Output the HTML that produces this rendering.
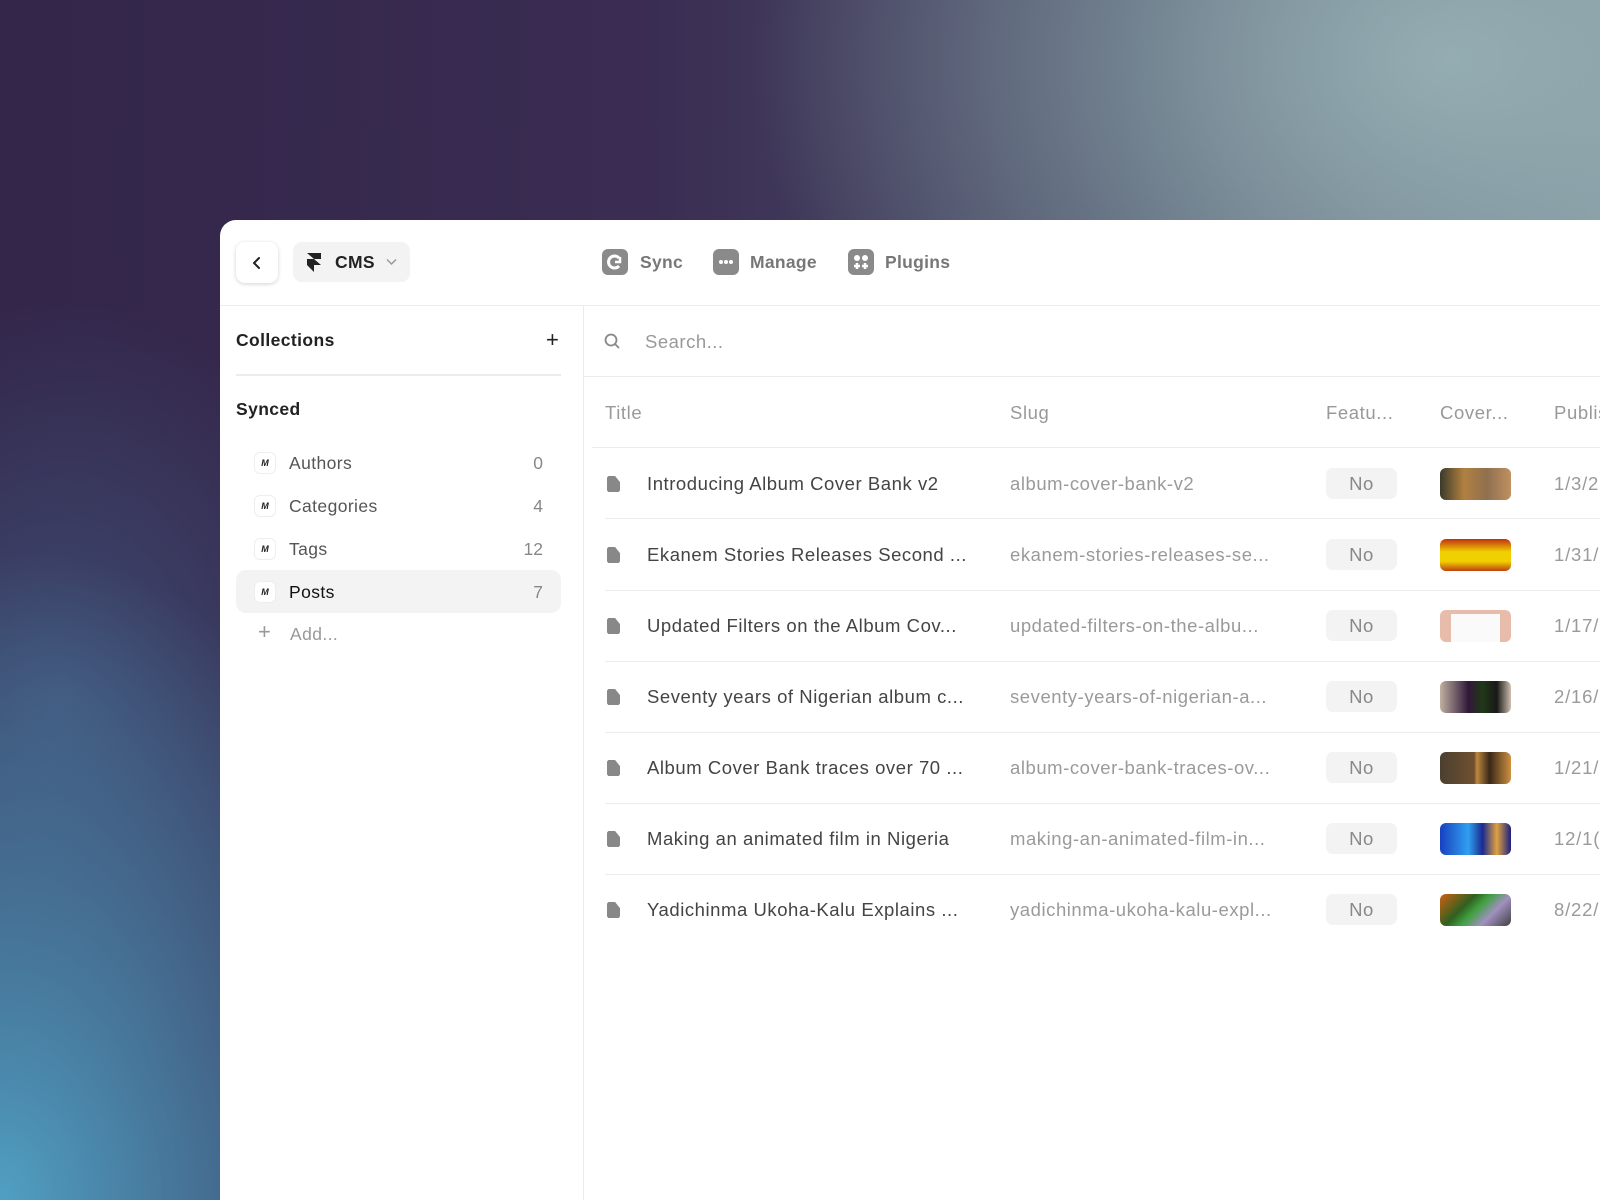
<!DOCTYPE html>
<html><head><meta charset="utf-8"><style>
*{box-sizing:border-box;margin:0;padding:0}
html,body{width:1600px;height:1200px;overflow:hidden}
body{position:relative;font-family:"Liberation Sans",sans-serif;background:#2e2242}
.bg{position:absolute;left:0;top:0;width:1600px;height:1200px;background:
radial-gradient(ellipse 700px 500px at 1450px 60px,rgba(150,175,180,0.95),rgba(150,175,180,0) 100%),
radial-gradient(ellipse 500px 650px at 0px 1200px,rgba(80,160,195,1),rgba(80,160,195,0) 100%),
radial-gradient(ellipse 300px 400px at 60px 700px,rgba(70,100,140,0.6),rgba(70,100,140,0) 100%),
linear-gradient(90deg,#33264a 0%,#3a2c52 40%,#4a5068 70%,#7a8e98 100%);}
.panel{position:absolute;left:220px;top:220px;width:1400px;height:1000px;background:#fff;border-radius:16px 0 0 0}
.a{position:absolute}
.btn{position:absolute;left:236px;top:242px;width:42px;height:41px;background:#fff;border-radius:9px;box-shadow:0 1px 4px rgba(0,0,0,.18)}
.cms{position:absolute;left:293px;top:242px;width:117px;height:40px;background:#f3f3f3;border-radius:9px}
.nav{position:absolute;top:252px;font-size:17.5px;color:#777;font-weight:bold;letter-spacing:0.3px}
.ic{position:absolute;top:249px;width:26px;height:26px;background:#8a8a8a;border-radius:6px}
.t{position:absolute;font-size:17.5px;color:#555;line-height:20px;letter-spacing:0.4px}
.row{position:absolute;left:605px;width:1000px;height:1px;background:#ececec}
.no{position:absolute;left:1326px;width:71px;height:31px;background:#f3f3f3;border-radius:7px;color:#888;font-size:18.5px;text-align:center;line-height:31px;letter-spacing:0.5px}
.th{position:absolute;left:1440px;width:71px;height:32px;border-radius:6px}
.rt{position:absolute;left:647px;font-size:18.5px;color:#444;letter-spacing:0.55px}
.rs{position:absolute;left:1010px;font-size:18.5px;color:#9a9a9a;letter-spacing:0.55px}
.rd{position:absolute;left:1554px;font-size:18.5px;color:#9a9a9a;white-space:nowrap;letter-spacing:0.8px}
.hd{position:absolute;top:402px;font-size:18.5px;color:#999;letter-spacing:0.6px}
.fi{position:absolute;left:607px;width:13px;height:16px;background:#888;clip-path:polygon(0 10%,10% 0,62% 0,100% 38%,100% 90%,90% 100%,10% 100%,0 90%)}
.ci{position:absolute;left:255px;width:20px;height:20px;border-radius:5px;background:#fff;box-shadow:0 0 0 1px #eee;font-size:9px;font-style:italic;font-weight:bold;text-align:center;line-height:20px;color:#222}
.cnt{position:absolute;right:1057px;font-size:17.5px;color:#888}
</style></head><body>
<div class="bg"></div>
<div class="panel"></div>
<div class="btn"><svg class="a" style="left:13px;top:13px" width="16" height="16" viewBox="0 0 16 16"><path d="M10 3 5 8l5 5" fill="none" stroke="#222" stroke-width="2" stroke-linecap="round" stroke-linejoin="round"/></svg></div>
<div class="cms"><svg class="a" style="left:13px;top:11px" width="16" height="19" viewBox="0 0 16 19"><path d="M1 0h14v6H8zM1 6h7l7 6H8v7L1 12z" fill="#222"/></svg><span class="a" style="left:42px;top:10px;font-size:17.5px;font-weight:bold;color:#222;letter-spacing:0.3px">CMS</span><svg class="a" style="left:93px;top:16px" width="11" height="8" viewBox="0 0 11 8"><path d="M1 1.5l4.5 4.5 4.5-4.5" fill="none" stroke="#999" stroke-width="1.5"/></svg></div>
<div class="ic" style="left:602px"><svg width="26" height="26" viewBox="0 0 26 26"><path d="M17 9a6 6 0 1 0 0 8" fill="none" stroke="#fff" stroke-width="3"/><path d="M13 13h5v-5" fill="none" stroke="#fff" stroke-width="2.5"/></svg></div>
<div class="nav" style="left:640px">Sync</div>
<div class="ic" style="left:713px"><svg width="26" height="26"><circle cx="8" cy="13" r="2" fill="#fff"/><circle cx="13" cy="13" r="2" fill="#fff"/><circle cx="18" cy="13" r="2" fill="#fff"/></svg></div>
<div class="nav" style="left:750px">Manage</div>
<div class="ic" style="left:848px"><svg width="26" height="26"><circle cx="9" cy="9" r="3" fill="#fff"/><circle cx="17" cy="9" r="3" fill="#fff"/><path d="M9 14v6M6 17h6M17 14v6M14 17h6" stroke="#fff" stroke-width="2.5"/></svg></div>
<div class="nav" style="left:885px">Plugins</div>
<div class="a" style="left:220px;top:305px;width:1380px;height:1px;background:#ececec"></div>
<div class="a" style="left:583px;top:305px;width:1px;height:895px;background:#ececec"></div>
<div class="t" style="left:236px;top:330px;font-weight:bold;color:#222">Collections</div>
<div class="a" style="left:546px;top:331px;font-size:22px;color:#222;line-height:18px">+</div>
<div class="a" style="left:236px;top:374px;width:325px;height:2px;background:#ececec"></div>
<div class="t" style="left:236px;top:399px;font-weight:bold;color:#222">Synced</div>
<div class="a" style="left:236px;top:570px;width:325px;height:43px;background:#f3f3f3;border-radius:10px"></div>
<div class="ci" style="top:453px">M</div><div class="t" style="left:289px;top:453px">Authors</div><div class="cnt" style="top:453px">0</div>
<div class="ci" style="top:496px">M</div><div class="t" style="left:289px;top:496px">Categories</div><div class="cnt" style="top:496px">4</div>
<div class="ci" style="top:539px">M</div><div class="t" style="left:289px;top:539px">Tags</div><div class="cnt" style="top:539px">12</div>
<div class="ci" style="top:582px">M</div><div class="t" style="left:289px;top:582px;color:#111">Posts</div><div class="cnt" style="top:582px">7</div>
<div class="a" style="left:258px;top:621px;font-size:22px;color:#999;line-height:22px">+</div><div class="t" style="left:290px;top:624px;color:#999">Add...</div>
<svg class="a" style="left:604px;top:333px" width="17" height="17" viewBox="0 0 17 17"><circle cx="7" cy="7" r="5.5" fill="none" stroke="#888" stroke-width="1.8"/><path d="M11 11l4 4" stroke="#888" stroke-width="1.8"/></svg>
<div class="a" style="left:645px;top:331px;font-size:18.5px;color:#999;letter-spacing:0.5px">Search...</div>
<div class="a" style="left:583px;top:376px;width:1017px;height:1px;background:#ececec"></div>
<div class="hd" style="left:605px">Title</div>
<div class="hd" style="left:1010px">Slug</div>
<div class="hd" style="left:1326px">Featu...</div>
<div class="hd" style="left:1440px">Cover...</div>
<div class="hd" style="left:1554px">Publis</div>
<div class="a" style="left:592px;top:447px;width:1008px;height:1px;background:#ececec"></div>

<div class="fi" style="top:476px"></div><div class="rt" style="top:473px">Introducing Album Cover Bank v2</div><div class="rs" style="top:473px">album-cover-bank-v2</div><div class="no" style="top:468px">No</div><div class="th" style="top:468px;background:linear-gradient(90deg,#3a3a2a,#b08040,#907050,#c09060)"></div><div class="rd" style="top:473px">1/3/2</div>
<div class="row" style="top:518px"></div>
<div class="fi" style="top:547px"></div><div class="rt" style="top:544px">Ekanem Stories Releases Second ...</div><div class="rs" style="top:544px">ekanem-stories-releases-se...</div><div class="no" style="top:539px">No</div><div class="th" style="top:539px;background:linear-gradient(180deg,#c03010,#f0d000 40%,#f0d000 70%,#c04010);"></div><div class="rd" style="top:544px">1/31/</div>
<div class="row" style="top:590px"></div>
<div class="fi" style="top:618px"></div><div class="rt" style="top:615px">Updated Filters on the Album Cov...</div><div class="rs" style="top:615px">updated-filters-on-the-albu...</div><div class="no" style="top:610px">No</div><div class="th" style="top:610px;background:#e8bcaa;"><div class="a" style="left:11px;top:4px;width:49px;height:28px;background:#fafafa"></div></div><div class="rd" style="top:615px">1/17/</div>
<div class="row" style="top:661px"></div>
<div class="fi" style="top:689px"></div><div class="rt" style="top:686px">Seventy years of Nigerian album c...</div><div class="rs" style="top:686px">seventy-years-of-nigerian-a...</div><div class="no" style="top:681px">No</div><div class="th" style="top:681px;background:linear-gradient(90deg,#c0b0a0,#301838 40%,#203818 60%,#181818 80%,#d0c0b0)"></div><div class="rd" style="top:686px">2/16/</div>
<div class="row" style="top:732px"></div>
<div class="fi" style="top:760px"></div><div class="rt" style="top:757px">Album Cover Bank traces over 70 ...</div><div class="rs" style="top:757px">album-cover-bank-traces-ov...</div><div class="no" style="top:752px">No</div><div class="th" style="top:752px;background:linear-gradient(90deg,#4a4030,#705030 48%,#c08840 52%,#3a2818 70%,#d09040)"></div><div class="rd" style="top:757px">1/21/</div>
<div class="row" style="top:803px"></div>
<div class="fi" style="top:831px"></div><div class="rt" style="top:828px">Making an animated film in Nigeria</div><div class="rs" style="top:828px">making-an-animated-film-in...</div><div class="no" style="top:823px">No</div><div class="th" style="top:823px;background:linear-gradient(90deg,#1840c0,#30a0f0 40%,#1a2a90 60%,#e0a040 80%,#1a2080)"></div><div class="rd" style="top:828px">12/1(</div>
<div class="row" style="top:874px"></div>
<div class="fi" style="top:902px"></div><div class="rt" style="top:899px">Yadichinma Ukoha-Kalu Explains ...</div><div class="rs" style="top:899px">yadichinma-ukoha-kalu-expl...</div><div class="no" style="top:894px">No</div><div class="th" style="top:894px;background:linear-gradient(135deg,#d06010,#306020 35%,#40a040 50%,#a090c0 70%,#404040)"></div><div class="rd" style="top:899px">8/22/</div>
</body></html>
